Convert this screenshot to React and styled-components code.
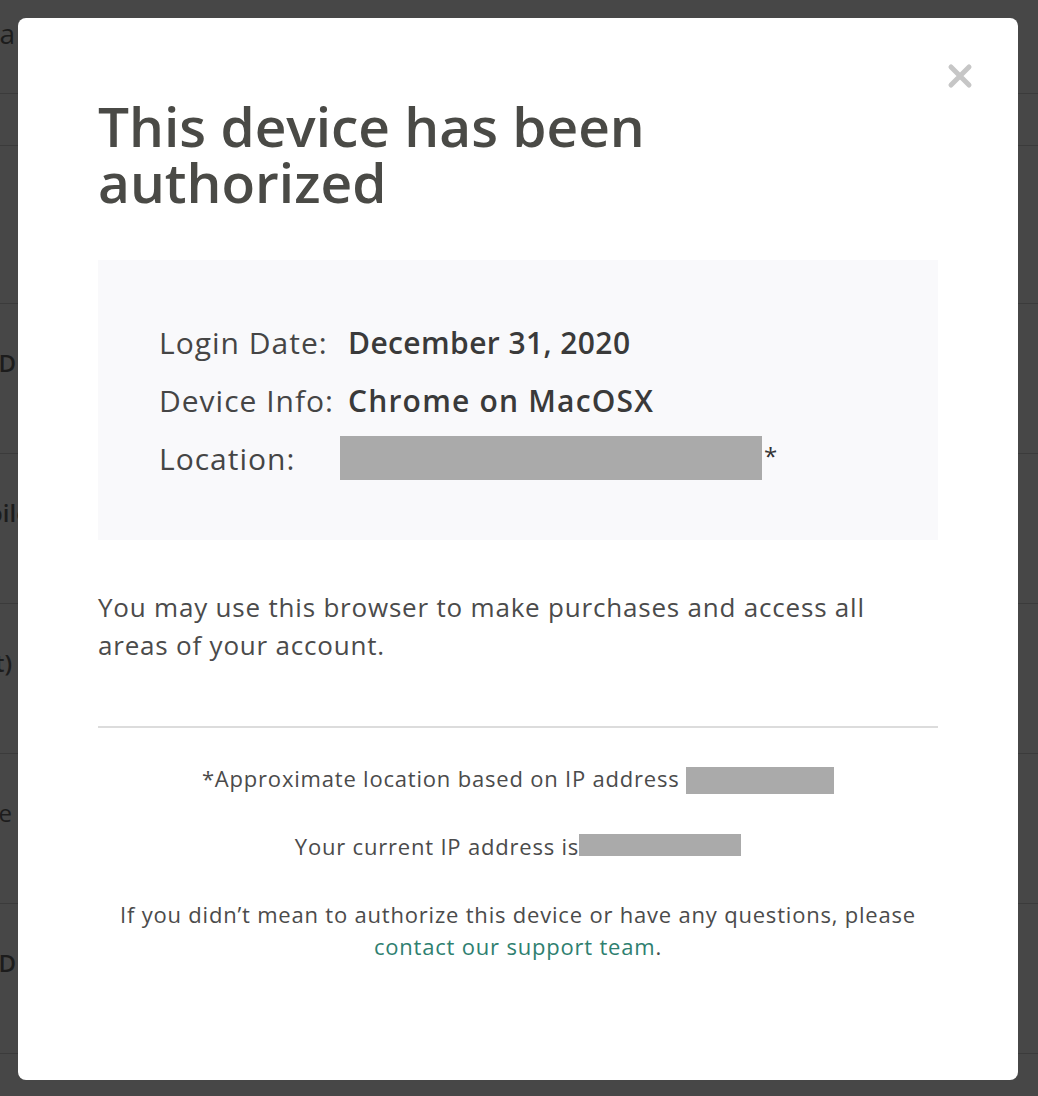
import React from "react";
import styled, { createGlobalStyle } from "styled-components";

const Global = createGlobalStyle`
  html, body { margin: 0; padding: 0; }
  body {
    background: #474747;
    font-family: "Open Sans", "Lato", sans-serif;
    overflow: hidden;
  }
  * { box-sizing: border-box; }
`;

const Page = styled.div`
  width: 1038px;
  height: 1096px;
  background: #474747;
`;

const PageHeader = styled.div`
  height: 93px;
  display: flex;
  align-items: flex-start;
  padding-top: 14px;
`;

const BgRow = styled.div`
  height: ${(p) => p.$h}px;
  border-top: 1px solid #3b3b3b;
  display: flex;
  align-items: flex-start;
  padding-top: ${(p) => p.$pt || 0}px;
`;

const BgLabel = styled.div`
  width: ${(p) => p.$w}px;
  flex: none;
  display: flex;
  justify-content: flex-end;
  white-space: nowrap;
  font-family: "Open Sans", sans-serif;
  font-size: ${(p) => p.$size || 24}px;
  font-weight: ${(p) => p.$weight || 600};
  color: #1c1c1c;
`;

const Overlay = styled.div`
  position: fixed;
  inset: 0;
  padding: 18px 20px 16px 18px;
`;

const Modal = styled.div`
  position: relative;
  width: 1000px;
  height: 1062px;
  background: #ffffff;
  border-radius: 8px;
  padding: 80px 80px 0 80px;
  display: flex;
  flex-direction: column;
  color: #4b4b4b;
`;

const Close = styled.button`
  position: absolute;
  top: 44px;
  right: 44px;
  width: 28px;
  height: 28px;
  padding: 0;
  border: none;
  background: transparent;
  display: flex;
  align-items: center;
  justify-content: center;
  cursor: pointer;
`;

const Title = styled.h1`
  margin: 0;
  font-family: "Open Sans", sans-serif;
  font-weight: 600;
  font-size: 55px;
  line-height: 56px;
  color: #4a4a46;
`;

const InfoBox = styled.div`
  margin-top: 50px;
  background: #f9f9fb;
  padding: 53px 60px 53px 61px;
  display: grid;
  grid-template-columns: 189px 1fr;
  grid-auto-rows: 58px;
  align-items: center;
  font-size: 30px;
`;

const Label = styled.div`
  color: #454545;
  font-weight: 400;
  letter-spacing: 1px;
`;

const Value = styled.div`
  color: #3a3a3a;
  font-weight: 600;
  letter-spacing: ${(p) => p.$ls ?? 0.4}px;
  display: flex;
  align-items: flex-start;
  margin-left: ${(p) => p.$shift || 0}px;
`;

const Redacted = styled.span`
  display: inline-block;
  width: ${(p) => p.$w}px;
  height: ${(p) => p.$h}px;
  background: #aaaaaa;
  vertical-align: top;
  margin-top: ${(p) => p.$mt || 0}px;
`;

const Star = styled.span`
  font-weight: 400;
  font-size: 24px;
  line-height: 1;
  margin-left: 2px;
  margin-top: 8px;
  color: #333;
`;

const Body = styled.p`
  margin: 48px 0 0 0;
  font-size: 26px;
  line-height: 38px;
  letter-spacing: 0.8px;
  color: #4b4b4b;
  max-width: 800px;
`;

const Divider = styled.hr`
  margin: 62px 0 0 0;
  border: none;
  height: 2px;
  background: #dcdcdc;
`;

const Footer = styled.div`
  margin-top: 34px;
  display: flex;
  flex-direction: column;
  gap: 36px;
  text-align: center;
  font-size: 22px;
  line-height: 32px;
  letter-spacing: 0.8px;
  color: #4b4b4b;
`;

const FootLine = styled.p`
  margin: 0;
`;

const Link = styled.a`
  color: #2f7f70;
  text-decoration: none;
`;

const XIcon = () => (
  <svg width="26" height="26" viewBox="0 0 26 26">
    <path
      d="M4 4 L22 22 M22 4 L4 22"
      stroke="#c6c6c6"
      strokeWidth="5"
      strokeLinecap="round"
    />
  </svg>
);

export default function App() {
  return (
    <>
      <Global />
      <Page>
        <PageHeader>
          <BgLabel $w={15} $weight={400} $size={28}>Data</BgLabel>
        </PageHeader>
        <BgRow $h={52} />
        <BgRow $h={158} />
        <BgRow $h={150} $pt={42}>
          <BgLabel $w={16}>Login ID</BgLabel>
        </BgRow>
        <BgRow $h={150} $pt={42}>
          <BgLabel $w={30}>Mobile</BgLabel>
        </BgRow>
        <BgRow $h={150} $pt={42}>
          <BgLabel $w={12}>(Text)</BgLabel>
        </BgRow>
        <BgRow $h={150} $pt={42}>
          <BgLabel $w={12} $weight={400}>Phone</BgLabel>
        </BgRow>
        <BgRow $h={150} $pt={42}>
          <BgLabel $w={16}>Account ID</BgLabel>
        </BgRow>
        <BgRow $h={43} />
      </Page>
      <Overlay>
        <Modal role="dialog" aria-modal="true">
          <Close aria-label="Close">
            <XIcon />
          </Close>
          <Title>
            This device has been
            <br />
            authorized
          </Title>
          <InfoBox>
            <Label>Login Date:</Label>
            <Value>December 31, 2020</Value>
            <Label>Device Info:</Label>
            <Value $ls={1.2}>Chrome on MacOSX</Value>
            <Label>Location:</Label>
            <Value $shift={-8}>
              <Redacted $w={422} $h={44} />
              <Star>*</Star>
            </Value>
          </InfoBox>
          <Body>
            You may use this browser to make purchases and access all areas of
            your account.
          </Body>
          <Divider />
          <Footer>
            <FootLine>
              *Approximate location based on IP address{" "}
              <Redacted $w={148} $h={27} $mt={5} />
            </FootLine>
            <FootLine>
              Your current IP address is
              <Redacted $w={162} $h={22} $mt={4} />
            </FootLine>
            <FootLine>
              If you didn’t mean to authorize this device or have any questions,
              please
              <br />
              <Link href="#">contact our support team</Link>.
            </FootLine>
          </Footer>
        </Modal>
      </Overlay>
    </>
  );
}
